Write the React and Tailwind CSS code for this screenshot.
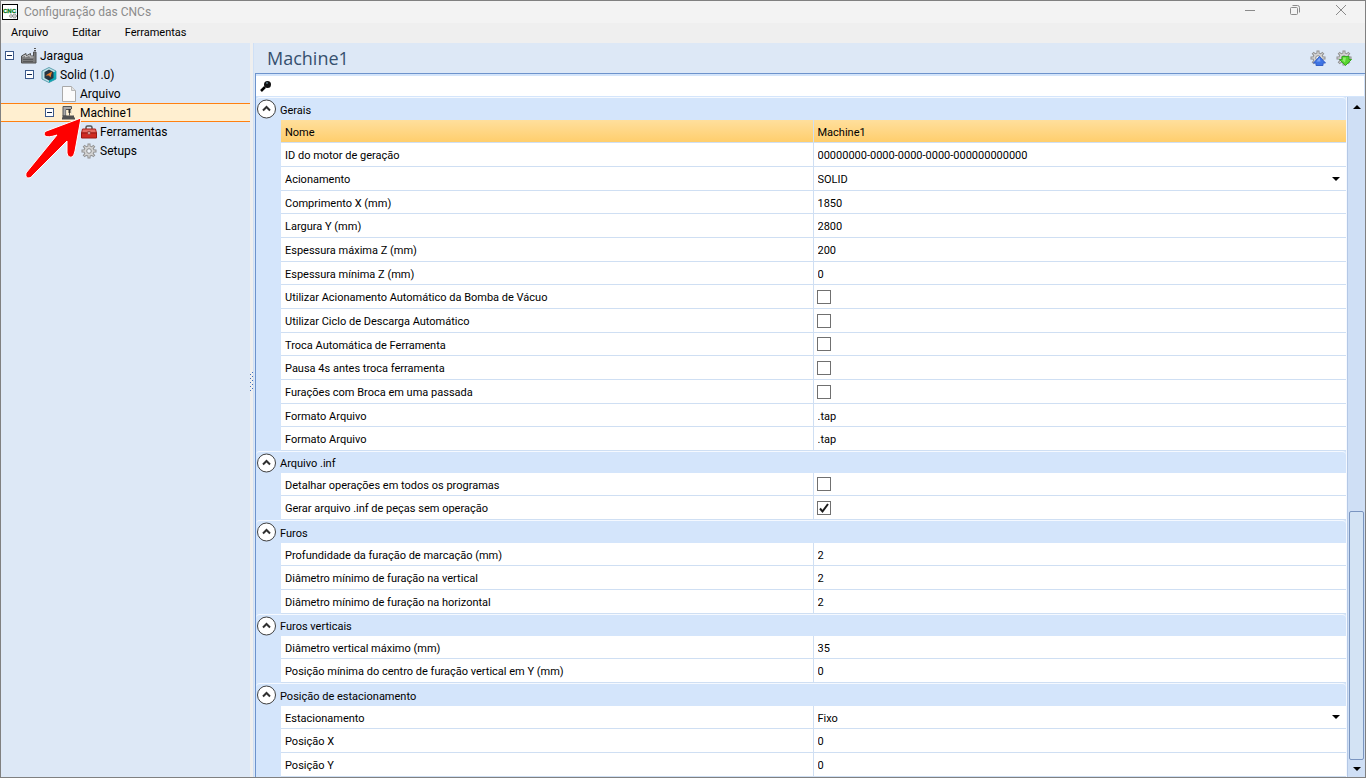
import React, { useState } from "react";

const sections = [
  {
    title: "Gerais",
    rows: [
      { label: "Nome", value: "Machine1", selected: true },
      { label: "ID do motor de geração", value: "00000000-0000-0000-0000-000000000000" },
      { label: "Acionamento", value: "SOLID", type: "select" },
      { label: "Comprimento X (mm)", value: "1850" },
      { label: "Largura Y (mm)", value: "2800" },
      { label: "Espessura máxima Z (mm)", value: "200" },
      { label: "Espessura mínima Z (mm)", value: "0" },
      { label: "Utilizar Acionamento Automático da Bomba de Vácuo", value: false, type: "check" },
      { label: "Utilizar Ciclo de Descarga Automático", value: false, type: "check" },
      { label: "Troca Automática de Ferramenta", value: false, type: "check" },
      { label: "Pausa 4s antes troca ferramenta", value: false, type: "check" },
      { label: "Furações com Broca em uma passada", value: false, type: "check" },
      { label: "Formato Arquivo", value: ".tap" },
      { label: "Formato Arquivo", value: ".tap" },
    ],
  },
  {
    title: "Arquivo .inf",
    rows: [
      { label: "Detalhar operações em todos os programas", value: false, type: "check" },
      { label: "Gerar arquivo .inf de peças sem operação", value: true, type: "check" },
    ],
  },
  {
    title: "Furos",
    rows: [
      { label: "Profundidade da furação de marcação (mm)", value: "2" },
      { label: "Diâmetro mínimo de furação na vertical", value: "2" },
      { label: "Diâmetro mínimo de furação na horizontal", value: "2" },
    ],
  },
  {
    title: "Furos verticais",
    rows: [
      { label: "Diâmetro vertical máximo (mm)", value: "35" },
      { label: "Posição mínima do centro de furação vertical em Y (mm)", value: "0" },
    ],
  },
  {
    title: "Posição de estacionamento",
    rows: [
      { label: "Estacionamento", value: "Fixo", type: "select" },
      { label: "Posição X", value: "0" },
      { label: "Posição Y", value: "0" },
    ],
  },
];

const AppIcon = () => (
  <svg width="16" height="16" viewBox="0 0 16 16">
    <rect x="0.5" y="0.5" width="15" height="15" fill="#fff" stroke="#000" />
    <text x="1" y="9" fontSize="6" fontWeight="bold" fontFamily="Liberation Sans" fill="#087a1c" stroke="#087a1c" strokeWidth="0.3">
      CNC
    </text>
    <circle cx="9" cy="12" r="1.5" fill="#ccc" stroke="#888" strokeDasharray="1 0.5" />
    <circle cx="12.5" cy="12" r="2" fill="#ccc" stroke="#777" strokeDasharray="1 0.5" />
  </svg>
);

const FactoryIcon = () => (
  <svg width="16" height="16" viewBox="0 0 16 16">
    <path d="M0.5 15V8L5 5.500V8l4.500-2.500V8H12.500V4h2.500v11z" fill="#7c7c7c" stroke="#505050" />
    <path d="M1.500 8.500 4.500 7v2L9 7v2h3.500" fill="none" stroke="#c4c4c4" />
    <path d="M2 11.500h10M2 13.500h10" stroke="#585858" />
    <path d="M13 0.500h2M13 2.500h2" stroke="#555" />
  </svg>
);

const SolidIcon = () => (
  <svg width="16" height="16" viewBox="0 0 16 16">
    <path d="M8 0.500 15 4v8l-7 3.500L1 12V4z" fill="#bfe3ea" stroke="#5b9fae" />
    <path d="M8 15.500 15 12V4l-3 1.500v5L8 12.500z" fill="#0fa5b2" />
    <path d="M8 2.500 12.500 5v6L8 13.500 3.500 11V5z" fill="#263642" />
    <path d="M4.500 8.500 11 4.500 9.500 10.500 8 8.500z" fill="#f07a25" />
  </svg>
);

const FileIcon = () => (
  <svg width="16" height="16" viewBox="0 0 16 16">
    <path d="M1.500 0.500h9l4 4v11h-13z" fill="#fbfbfb" stroke="#a9a9a9" />
    <path d="M10.500 0.500v4h4" fill="#e2e2e2" stroke="#b9b9b9" />
  </svg>
);

const MachineIcon = () => (
  <svg width="16" height="16" viewBox="0 0 16 16">
    <path d="M2 11V1.500h8.500v3H5V11z" fill="#a8a8a8" stroke="#555" />
    <path d="M5.500 5v5.500M10.500 4v5" stroke="#e8e0cc" />
    <path d="M8.500 4v4" stroke="#333" strokeWidth="2" />
    <path d="M8.500 8v2.500" stroke="#555" />
    <path d="M1.500 11.500h11.500M1 13.500h13" stroke="#505050" strokeWidth="2" />
  </svg>
);

const ToolboxIcon = () => (
  <svg width="16" height="16" viewBox="0 0 16 16">
    <path d="M5 5V3.500q0-1.500 1.500-1.500h3q1.500 0 1.500 1.500V5" fill="none" stroke="#555" strokeWidth="1.500" />
    <path d="M1.500 5h13l1 4h-15z" fill="#e66a60" stroke="#a82018" />
    <path d="M0.500 9h15v5h-15z" fill="#cf2b22" stroke="#9a1812" />
    <rect x="7" y="7.500" width="2" height="3" fill="#f3e4e2" stroke="#a8453e" />
  </svg>
);

const gearTeeth = [0, 45, 90, 135];

const Gear = () => (
  <g>
    {gearTeeth.map((angle) => (
      <path key={angle} d="M8 0.500v15" stroke="#8f8f8f" strokeWidth="3" transform={`rotate(${angle} 8 8)`} />
    ))}
    <circle cx="8" cy="8" r="5.500" fill="#909090" />
    {gearTeeth.map((angle) => (
      <path key={angle} d="M8 1.500v13" stroke="#d8d8d8" strokeWidth="1.200" transform={`rotate(${angle} 8 8)`} />
    ))}
    <circle cx="8" cy="8" r="4.500" fill="#d4d4d4" />
    <circle cx="8" cy="8" r="2.300" fill="#f0f4fa" stroke="#8c8c8c" />
  </g>
);

const GearIcon = () => (
  <svg width="16" height="16" viewBox="0 0 16 16">
    <Gear />
  </svg>
);

const GearUpIcon = () => (
  <svg width="16" height="16" viewBox="0 0 16 16">
    <Gear />
    <path d="M9.500 6.500 15.500 13h-2.500v2.500H6V13H3.500z" fill="#3e74e4" stroke="#3560c8" />
    <path d="M9.500 7.500 6.500 11.500h4z" fill="#7ba4f4" />
  </svg>
);

const GearDownIcon = () => (
  <svg width="16" height="16" viewBox="0 0 16 16">
    <Gear />
    <path d="M9.500 15.500 15.500 9.500H13V6.500H6v3H3.500z" fill="#58d430" stroke="#36ac20" />
    <path d="M7 7.500h3l-1 5L6 10h1z" fill="#8eec6c" />
  </svg>
);

const tree = [
  { label: "Jaragua", icon: <FactoryIcon />, indent: "pl-1", open: true },
  { label: "Solid (1.0)", icon: <SolidIcon />, indent: "pl-6", open: true },
  { label: "Arquivo", icon: <FileIcon />, indent: "pl-11" },
  { label: "Machine1", icon: <MachineIcon />, indent: "pl-11", open: true, selected: true },
  { label: "Ferramentas", icon: <ToolboxIcon />, indent: "pl-16" },
  { label: "Setups", icon: <GearIcon />, indent: "pl-16" },
];

const Triangle = ({ up }) => (
  <svg width="8" height="4" viewBox="0 0 8 4">
    <path d={up ? "M0 4 4 0 8 4z" : "M0 0h8L4 4z"} fill="#000" />
  </svg>
);

const TitleBar = () => (
  <header className="flex h-[22px] items-center bg-[#f3f3f3] pl-px">
    <AppIcon />
    <h1 className="ml-1.5 flex-1 text-[12px] text-[#8c8c8c]">Configuração das CNCs</h1>
    <div className="flex h-full items-start pr-px">
      <button aria-label="Minimizar" className="flex h-5 w-[46px] items-center justify-center">
        <svg width="12" height="12" viewBox="0 0 12 12" fill="none" stroke="#8a8a8a">
          <path d="M2 5.500h10" />
        </svg>
      </button>
      <button aria-label="Restaurar" className="flex h-5 w-[46px] items-center justify-center">
        <svg width="12" height="12" viewBox="0 0 12 12" fill="none" stroke="#8a8a8a">
          <rect x="1.500" y="2.500" width="7" height="7" rx="1" />
          <path d="M3.500 0.500h5q2 0 2 2v5" />
        </svg>
      </button>
      <button aria-label="Fechar" className="flex h-5 w-[46px] items-center justify-center">
        <svg width="12" height="12" viewBox="0 0 12 12" fill="none" stroke="#8a8a8a">
          <path d="M1 0l10 10M11 0L1 10" />
        </svg>
      </button>
    </div>
  </header>
);

const MenuBar = () => (
  <nav className="flex h-5 items-center gap-6 bg-[#efefef] pl-2.5 text-[11px]">
    <button>Arquivo</button>
    <button>Editar</button>
    <button>Ferramentas</button>
  </nav>
);

const TreeItem = ({ item }) => (
  <li
    className={`flex h-[19px] items-center ${item.indent} ${
      item.selected ? "border-y border-[#ff8010] bg-[#ffefd0]" : ""
    }`}
  >
    <span className="flex w-4 items-center">
      {item.open && (
        <button aria-label={"Recolher " + item.label}>
          <svg className="block" width="9" height="9" viewBox="0 0 9 9">
            <rect x="0.500" y="0.500" width="8" height="8" fill="#fff" stroke="#3c5a8c" />
            <path d="M2 4.500h5" stroke="#10264f" />
          </svg>
        </button>
      )}
    </span>
    {item.icon}
    <span className="ml-[3px] text-[12px]">{item.label}</span>
  </li>
);

const PropertyRow = ({ row, id }) => {
  const [value, setValue] = useState(row.value);

  return (
    <div
      className={`grid h-6 grid-cols-2 border-b border-[#cfdff3] nth-[3n+1]:h-[23px] ${
        row.selected ? "bg-linear-to-b from-[#ffdf9c] to-[#ffce6c]" : "bg-white"
      }`}
    >
      <label htmlFor={id} className="flex items-center border-r border-[#cfdff3] pt-1 pl-1">
        {row.label}
      </label>
      <div className="relative flex items-center pl-1">
        {row.type === "check" && (
          <span className="relative flex">
            <input
              id={id}
              type="checkbox"
              checked={value}
              onChange={(e) => setValue(e.target.checked)}
              className="-ml-px size-3.5 appearance-none border border-[#707070] bg-white"
            />
            {value && (
              <svg className="pointer-events-none absolute top-0 -left-px" width="14" height="14" viewBox="0 0 14 14">
                <path d="M3 7.500 5.500 10.500 11 3" fill="none" stroke="#1a1a1a" strokeWidth="2" />
              </svg>
            )}
          </span>
        )}
        {row.type === "select" && (
          <>
            <select
              id={id}
              value={value}
              onChange={(e) => setValue(e.target.value)}
              className="w-full appearance-none pt-1 outline-none"
            >
              <option>{row.value}</option>
            </select>
            <span className="pointer-events-none absolute right-1.5">
              <Triangle />
            </span>
          </>
        )}
        {!row.type && (
          <input
            id={id}
            type="text"
            value={value}
            onChange={(e) => setValue(e.target.value)}
            className="w-full pt-1 outline-none"
          />
        )}
      </div>
    </div>
  );
};

const Section = ({ section, index }) => {
  const [open, setOpen] = useState(true);

  return (
    <section className="group bg-[#d4e5fb]">
      <div className="flex h-[23px] items-center rounded-t border-t border-[#f5f9ff] group-even:h-[22px]">
        <button aria-label={section.title} aria-expanded={open} onClick={() => setOpen(!open)}>
          <svg className="block" width="20" height="20" viewBox="0 0 20 20" fill="none">
            <circle cx="10.500" cy="10" r="9" fill="#fff" stroke="#404040" />
            <path d="M7 11.500 10.500 8l3.500 3.500" stroke="#303030" strokeWidth="2" />
          </svg>
        </button>
        <h3 className="ml-1 pt-1">{section.title}</h3>
      </div>
      {open && (
        <div className="pl-[25px]">
          {section.rows.map((row, i) => (
            <PropertyRow key={i} row={row} id={`prop-${index}-${i}`} />
          ))}
        </div>
      )}
    </section>
  );
};

const ScrollBar = () => (
  <div className="flex w-[18px] flex-col items-center border-l border-[#b4c8e6] bg-[#cfdff5]">
    <button aria-label="Rolar para cima" className="flex h-5 items-center">
      <Triangle up />
    </button>
    <div className="flex-[8]"></div>
    <div className="w-[15px] flex-[5] rounded-xs border border-[#7a95c0] bg-[#d3e3f4]"></div>
    <button aria-label="Rolar para baixo" className="flex h-[17px] items-center">
      <Triangle />
    </button>
  </div>
);

const Splitter = () => (
  <div className="flex w-1 items-center justify-center border-r border-[#cfe0f6] bg-[#efefef] pb-14">
    <svg width="3" height="20" viewBox="0 0 3 20">
      {[0, 4, 8, 12, 16].map((y) => (
        <path key={y} d={`M0 ${y + 2.5}h1M2 ${y + 0.5}h1`} stroke="#3f6fbc" />
      ))}
    </svg>
  </div>
);

const App = () => {
  return (
    <div className="flex min-h-screen flex-col border border-[#808080] bg-[#dde8f6] font-[Roboto,sans-serif] text-black">
      <TitleBar />
      <MenuBar />
      <div className="flex flex-1">
        <aside className="relative w-[249px] shrink-0 pt-[3px]">
          <ul>
            {tree.map((item) => (
              <TreeItem key={item.label} item={item} />
            ))}
          </ul>
          <svg className="pointer-events-none absolute top-[74px] left-6" width="60" height="64" viewBox="0 0 60 64">
            <path
              d="M56 1 24 13Q17 15 20 19q3 2 12-1L1 56q-1 5 3 5 2 0 4-3L42 24v12q1 5 5 4 2-1 3-6z"
              fill="#fe0000"
              stroke="#fff"
              strokeWidth="1"
            />
          </svg>
        </aside>
        <Splitter />
        <main className="flex flex-1 flex-col pl-px">
          <div className="flex h-[30px] items-center gap-2.5 pr-[13px] pl-3">
            <h2 className="flex-1 font-['Open_Sans',sans-serif] text-[18px] text-[#36506e]">Machine1</h2>
            <button aria-label="Exportar">
              <GearUpIcon />
            </button>
            <button aria-label="Importar">
              <GearDownIcon />
            </button>
          </div>
          <div className="flex flex-1 flex-col border-t border-l border-[#6d93cc] bg-[#d4e5fb] pt-0.5">
            <div className="mr-px flex h-5 items-center bg-white pl-1">
              <svg width="12" height="12" viewBox="0 0 12 12">
                <path d="M1 11 5 7" stroke="#000" strokeWidth="2.500" />
                <circle cx="7.500" cy="4.500" r="3.500" fill="#111" />
                <path d="M6 3h2" stroke="#7fa6b8" />
              </svg>
              <input type="search" aria-label="Pesquisar" className="ml-1 flex-1 text-[11px] outline-none" />
            </div>
            <div className="mt-px flex flex-1">
              <div className="flex-1 border-r border-[#f5f9ff] text-[11px]">
                {sections.map((section, i) => (
                  <Section key={section.title} section={section} index={i} />
                ))}
              </div>
              <ScrollBar />
            </div>
          </div>
        </main>
      </div>
    </div>
  );
};

export default App;
